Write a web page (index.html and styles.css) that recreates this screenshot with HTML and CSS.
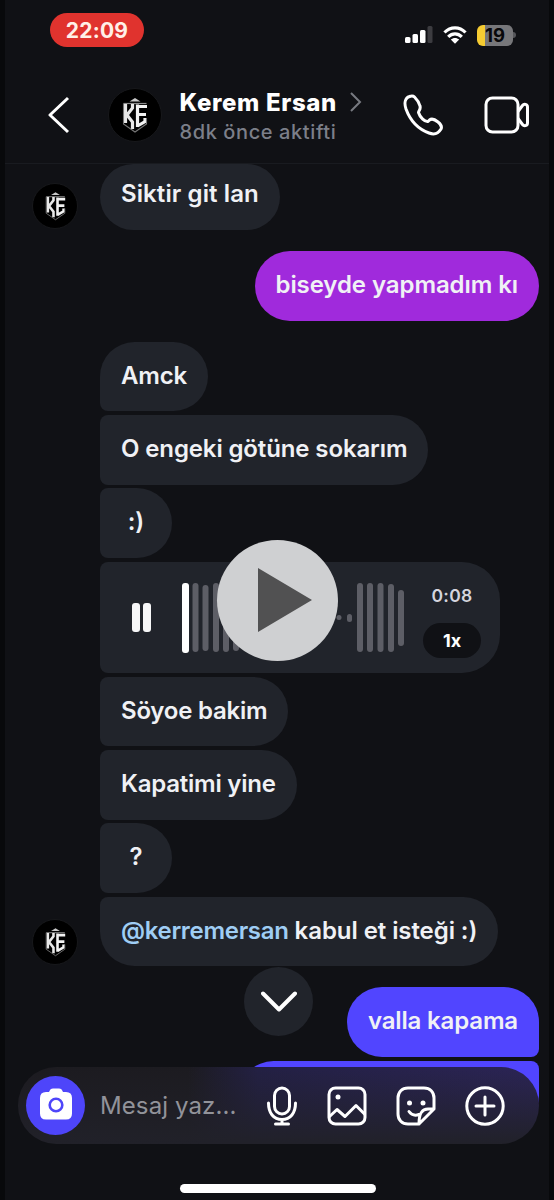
FILE: index.html
```
<!DOCTYPE html>
<html lang="tr">
<head>
<meta charset="utf-8">
<title>Kerem Ersan</title>
<link rel="stylesheet" href="styles.css">
</head>
<body>
<svg class="defs" width="0" height="0" aria-hidden="true">
  <symbol id="crest" viewBox="0 0 26 36">
    <path d="M7.500 4.500 13 1l5.500 3.500z" fill="#c8c8c8"/>
    <path d="M1.500 6.500h23" stroke="#8a8a8a" stroke-width="1.200"/>
    <path d="M3.500 7v19M10.500 7v4L5 18l5.500 7v7" fill="none" stroke="#e8e8e8" stroke-width="3.200"/>
    <path d="M15.500 7.500v22.500M15.500 9.500H25M15.500 17.500H24M15.500 29l7.500-4.500V21" fill="none" stroke="#f2f2f2" stroke-width="3.200"/>
    <path d="M1.500 6.500V27L13 35l11.500-8V21" fill="none" stroke="#777" stroke-width="1.100"/>
  </symbol>
</svg>
<main class="phone">
  <div class="status">
    <span class="clock">22:09</span>
    <div class="indicators">
      <svg width="28" height="18" viewBox="0 0 28 18"><rect x="0" y="11" width="5.500" height="6" rx="1.500" fill="#fff"/><rect x="7.500" y="8" width="5.500" height="9" rx="1.500" fill="#fff"/><rect x="15" y="4" width="5.500" height="13" rx="1.500" fill="#fff"/><rect x="22.500" y="0" width="5" height="17" rx="1.500" fill="#3c3c40"/></svg>
      <svg class="wifi" width="24" height="18" viewBox="0 0 24 18" fill="none" stroke="#fff" stroke-width="3.200"><path d="M1.500 6.500C7.500.300 16.500.300 22.500 6.500M5.200 10.800c4-4 9.600-4 13.600 0"/><path d="M7.800 13.600c2.500-2.200 5.900-2.200 8.400 0L12 17.800z" fill="#fff" stroke="none"/></svg>
      <div class="battery"><span>19</span></div><i class="nub"></i>
    </div>
  </div>
  <header class="header">
    <svg class="back" width="22" height="38" viewBox="0 0 22 38"><path d="M20 2 2 19l18 17" fill="none" stroke="#fff" stroke-width="3" stroke-linejoin="round"/></svg>
    <div class="avatar avatar-large"><svg width="26" height="36"><use href="#crest"/></svg></div>
    <div class="person">
      <div class="name">Kerem Ersan<svg width="12" height="20" viewBox="0 0 12 20"><path d="m1 1 9 9-9 9" fill="none" stroke="#777a80" stroke-width="2"/></svg></div>
      <div class="activity">8dk önce aktifti</div>
    </div>
    <svg class="call" width="42" height="42" viewBox="0 0 42 42"><path d="M6.500 2.500C2 4 1 9 3 15c4 11 12 20 23 24 5 2 9 1 12-4 1.500-3-.5-5-3-7-3-2.500-6-4-8.500-2l-1.500 1.500c-3 .5-8-4-9.500-9 0-2 2.500-3 1.500-6.500C16 8 13.500 5 11.500 3 10 1.500 8.500 1.700 6.500 2.500z" fill="none" stroke="#fff" stroke-width="3" stroke-linejoin="round"/></svg>
    <svg class="video" width="46" height="38" viewBox="0 0 46 38" fill="none" stroke="#fff" stroke-width="3" stroke-linejoin="round"><rect x="2" y="2" width="32" height="34" rx="6.500"/><path d="M34 15.500 38.500 9.500C40 7.500 43.500 8 43.500 11v16c0 3-3.500 3.500-5 1.500L34 22.500"/></svg>
  </header>
  <section class="chat">
    <div class="row first"><div class="avatar"><svg width="21" height="30"><use href="#crest"/></svg></div><div class="bubble top"><span>Siktir git lan</span></div></div>
    <div class="row sent gap"><div class="bubble purple"><span>biseyde yapmadım kı</span></div></div>
    <div class="row gap"><div class="bubble start"><span>Amck</span></div></div>
    <div class="row"><div class="bubble"><span>O engeki götüne sokarım</span></div></div>
    <div class="row"><div class="bubble short">:)</div></div>
    <div class="row">
      <div class="bubble audio">
        <div class="pause"><i></i><i></i></div>
        <svg class="wave" width="223" height="70" viewBox="0 0 223 70"><rect width="7" height="70" rx="3" fill="#fff"/><g fill="#5d5e66"><rect x="10.500" width="6" height="69" rx="3"/><rect x="20.500" y="2" width="6" height="66" rx="3"/><rect x="31" width="6" height="69" rx="3"/><rect x="41" y="1" width="6" height="68" rx="3"/><rect x="51" y="2" width="6" height="66" rx="3"/><rect x="154.500" y="32" width="5" height="5" rx="2.500"/><rect x="165" y="31" width="5" height="8" rx="2.500"/><rect x="175" width="6" height="69" rx="3"/><rect x="185" width="6" height="69" rx="3"/><rect x="195.500" width="6" height="69" rx="3"/><rect x="206" y="1" width="6" height="68" rx="3"/><rect x="216" y="7" width="6" height="56" rx="3"/></g></svg>
        <div class="meta"><span class="time">0:08</span><span class="speed">1x</span></div>
      </div>
    </div>
    <div class="row"><div class="bubble tight"><span>Söyoe bakim</span></div></div>
    <div class="row"><div class="bubble tight"><span>Kapatimi yine</span></div></div>
    <div class="row"><div class="bubble short">?</div></div>
    <div class="row"><div class="avatar low"><svg width="21" height="30"><use href="#crest"/></svg></div><div class="bubble end"><span><b>@kerremersan</b> kabul et isteği :)</span></div></div>
    <div class="row sent gap"><div class="bubble blue"><span>valla kapama</span></div></div>
    <div class="row sent"><div class="bubble blue next"></div></div>
  </section>
  <div class="down"><svg width="36" height="22" viewBox="0 0 36 22"><path d="m2 2.500 16 16 16-16" fill="none" stroke="#fff" stroke-width="4" stroke-linecap="round" stroke-linejoin="round"/></svg></div>
  <footer class="composer">
    <div class="camera"><svg width="32" height="32" viewBox="0 0 32 32"><path d="M9 4c1-2.500 2-3.500 4-3.500h6c2 0 3 1 4 3.500h3q6 0 6 6v15.500q0 6-6 6H6q-6 0-6-6V10q0-6 6-6z" fill="#fff"/><circle cx="16" cy="17" r="6.300" fill="#fff" stroke="#4e45fa" stroke-width="2.600"/></svg></div>
    <span class="placeholder">Mesaj yaz...</span>
    <div class="tools">
      <svg width="32" height="40" viewBox="0 0 32 40" fill="none" stroke="#fff" stroke-width="3" stroke-linecap="round"><rect x="8.500" y="2" width="15" height="26" rx="7.500"/><path d="M2.500 17c0 10 5 16.500 13.500 16.500S29.500 27 29.500 17M16 34v4M9.500 38h13"/></svg>
      <svg width="40" height="40" viewBox="0 0 40 40" fill="none" stroke="#fff" stroke-width="3" stroke-linejoin="round"><rect x="2" y="2" width="36" height="36" rx="6.500"/><path d="m2 31 8-7.500 8 7 11-11 9 9"/><circle cx="11" cy="11" r="2.500" fill="#fff" stroke="none"/></svg>
      <svg width="40" height="40" viewBox="0 0 40 40" fill="none" stroke="#fff" stroke-width="3" stroke-linejoin="round" stroke-linecap="round"><path d="M12 2h16c6 0 10 4 10 10v11L23 38H12C6 38 2 34 2 28V12C2 6 6 2 12 2zM38 23h-6c-6 0-9 4-9 15M13 25.500c2.500 3.500 6 4.500 10 3"/><g fill="#fff" stroke="none"><circle cx="13.500" cy="17" r="2.500"/><circle cx="27" cy="17" r="2.500"/></g></svg>
      <svg width="40" height="40" viewBox="0 0 40 40" fill="none" stroke="#fff" stroke-width="3" stroke-linecap="round"><circle cx="20" cy="20" r="18.200"/><path d="M20 11v18M11 20h18"/></svg>
    </div>
  </footer>
  <div class="home"></div>
  <button class="play" aria-label="Oynat"><svg width="54" height="64" viewBox="0 0 54 64"><path d="M0 0 54 32 0 64z" fill="#515152"/></svg></button>
</main>
</body>
</html>
```
FILE: styles.css
```
* { box-sizing: border-box; }
body { margin: 0; background: #08090b; font-family: Inter, "Liberation Sans", sans-serif; color: #f0f1f5; }
svg { display: block; flex: none; }
.defs { position: absolute; }
.phone { position: relative; width: 554px; height: 1200px; overflow: hidden; background: #101115; border-left: 5px solid #08090b; border-right: 5px solid #08090b; }
.status { height: 60px; padding: 13px 33px 0 45px; display: flex; justify-content: space-between; align-items: flex-start; }
.clock { width: 94px; height: 34px; border-radius: 17px; background: #e0332e; color: #fff0e8; font-size: 21px; line-height: 35px; font-weight: 700; text-align: center; letter-spacing: .2px; }
.indicators { display: flex; align-items: center; height: 44px; }
.wifi { margin: 0 10px 0 10px; }
.battery { width: 36px; height: 21px; border-radius: 6px; background: linear-gradient(90deg, #f6cc32 8px, #77777a 8px); color: #08080a; font-weight: 700; font-size: 18.500px; line-height: 21px; text-align: center; }
.nub { width: 3px; height: 6px; border-radius: 0 3px 3px 0; background: #55565a; }
.header { height: 104px; padding: 0 20px 0 43px; display: flex; align-items: center; border-bottom: 1px solid #191b20; }
.back { margin: 7px 38px 0 0; }
.avatar { flex: none; width: 46px; height: 46px; border-radius: 50%; background: #000; border: 1px solid #17181b; display: flex; align-items: center; justify-content: center; }
.avatar-large { width: 54px; height: 54px; margin-top: 7px; }
.person { flex: none; margin: 10px 0 0 17.500px; width: 223.500px; }
.name { display: flex; align-items: center; gap: 13px; font-size: 24px; line-height: 30px; font-weight: 800; color: #fff; white-space: nowrap; letter-spacing: .65px; }
.name svg { margin-top: -2px; }
.activity { font-size: 20px; line-height: 28px; font-weight: 500; color: #7c7f89; white-space: nowrap; letter-spacing: .6px; }
.call { margin-top: 7px; }
.video { margin: 7px 0 0 38.500px; }
.chat { display: flex; flex-direction: column; gap: 3.800px; padding: 0 10px 0 95px; height: 960px; overflow: hidden; }
.row { display: flex; flex: none; }
.row .avatar { margin: 19px 22px 0 -68px; }
.row .low { margin-top: 22px; }
.gap { margin-top: 17.200px; }
.sent { justify-content: flex-end; }
.bubble { height: 69.600px; padding: 0 21px 2.500px; border-radius: 8px 35px 35px 8px; background: #21242b; display: flex; align-items: center; font-size: 24px; font-weight: 600; letter-spacing: -.12px; white-space: nowrap; }
.tight { letter-spacing: -.23px; }
.top { height: 66px; border-radius: 35px; padding-bottom: 7px; letter-spacing: .1px; }
.start { border-radius: 35px 35px 35px 8px; letter-spacing: -.2px; }
.end { border-radius: 8px 35px 35px 35px; letter-spacing: -.07px; }
.short { width: 72px; justify-content: center; }
.purple { background: #a02adc; border-radius: 35px; letter-spacing: -.08px; }
.blue { background: #5145ff; border-radius: 35px 35px 8px 35px; letter-spacing: -.15px; }
.next { width: 300px; border-radius: 35px 8px 35px 35px; }
.bubble b { color: #9fcdf4; font-weight: 600; letter-spacing: -.3px; }
.audio { width: 400px; height: 111px; padding: 0; align-items: flex-start; border-radius: 8px 38px 38px 8px; }
.pause { display: flex; gap: 3px; margin: 41px 0 0 32px; width: 50px; }
.pause i { width: 8px; height: 29px; border-radius: 3px; background: #f7f7f8; }
.wave { margin-top: 21px; }
.meta { display: flex; flex-direction: column; align-items: center; width: 58px; margin: 21px 0 0 18px; }
.time { font-size: 17.500px; line-height: 26px; letter-spacing: .3px; color: #d4d5de; }
.speed { width: 58px; height: 35px; margin-top: 14px; border-radius: 18px; background: #101115; color: #fff; font-size: 18px; font-weight: 700; line-height: 35px; text-align: center; letter-spacing: 0; }
.down { position: absolute; left: 239px; top: 967px; width: 69px; height: 69px; border-radius: 50%; background: #21242b; display: flex; align-items: center; justify-content: center; }
.composer { position: absolute; left: 13px; top: 1067px; width: 521px; height: 77px; border-radius: 38px; padding: 0 34px 0 8px; display: flex; align-items: center; background: linear-gradient(180deg, transparent, #212129), linear-gradient(90deg, #1c1b20 170px, #232044 240px, #2b2456 100%); }
.camera { width: 59px; height: 59px; border-radius: 50%; background: #4e45fa; display: flex; align-items: center; justify-content: center; flex: none; }
.camera svg { margin-top: -3px; }
.placeholder { margin-left: 15px; width: 166px; font-size: 24px; letter-spacing: .1px; color: #92939a; white-space: nowrap; }
.tools { display: flex; justify-content: space-between; width: 239px; flex: none; }
.home { position: absolute; left: 175px; top: 1184px; width: 196px; height: 9px; border-radius: 5px; background: #fff; }
.play { position: absolute; left: 211.500px; top: 539.500px; width: 121px; height: 121px; padding: 0 0 0 41px; border: 0; border-radius: 50%; background: #cfd0d2; display: flex; align-items: center; }
```
